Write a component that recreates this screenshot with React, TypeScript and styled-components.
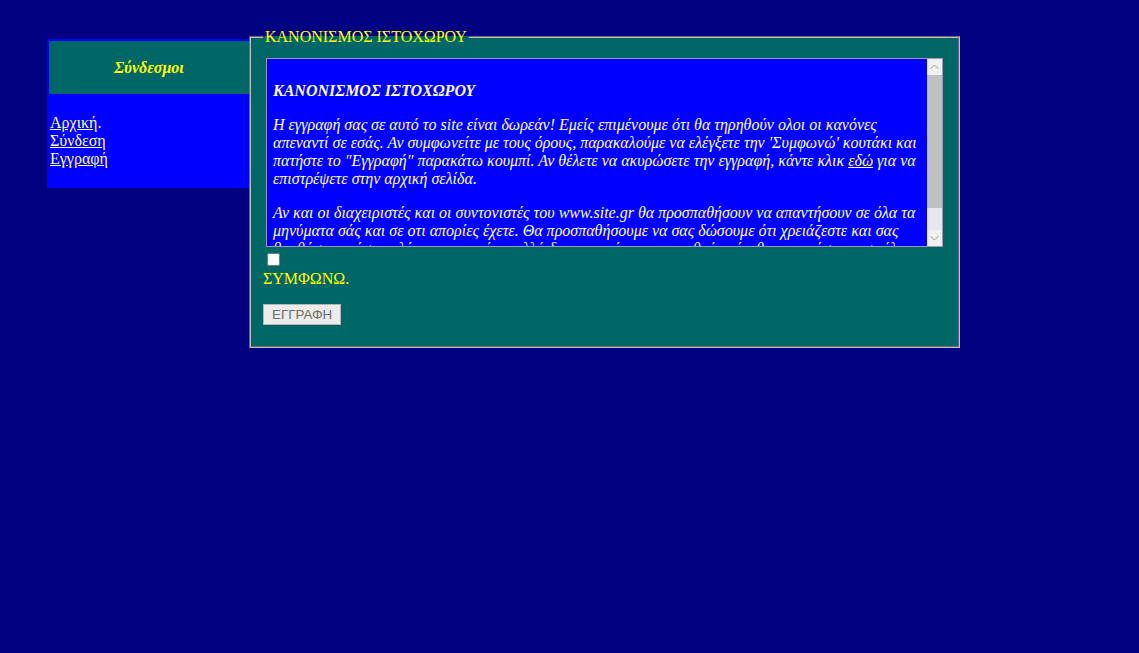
import styled, { createGlobalStyle } from "styled-components";

const GlobalStyle = createGlobalStyle`
  html, body {
    margin: 0;
    padding: 0;
    background: #000080;
  }
  body {
    font-family: "Liberation Serif", "Times New Roman", serif;
    font-size: 16px;
    line-height: 18px;
    color: #ffff00;
  }
`;

const Page = styled.div`
  display: flex;
  align-items: flex-start;
  padding: 28px 0 0 47px;
  min-height: 653px;
  box-sizing: border-box;
`;

const Sidebar = styled.div`
  width: 202px;
  margin-top: 11px;
  padding: 2px 0 2px 2px;
  box-sizing: border-box;
  background: #0000ff;
`;

const SidebarHeader = styled.div`
  height: 53px;
  display: flex;
  align-items: center;
  justify-content: center;
  background: #006666;
  color: #ffff00;
  font-weight: bold;
  font-style: italic;
  font-size: 16px;
`;

const SidebarLinks = styled.div`
  padding: 20px 1px 18px;
`;

const NavLink = styled.a`
  color: #ffffcc;
  text-decoration: underline;
`;

const Rules = styled.fieldset`
  width: 711px;
  box-sizing: border-box;
  margin: 0;
  padding: 12px 12px 21px;
  border: 2px groove #c0c0c0;
  background: #006666;
  min-width: 0;
`;

const Legend = styled.legend`
  padding: 0 2px;
  color: #ffff00;
  font-size: 16px;
  line-height: 18px;
`;

const ScrollFrame = styled.div`
  display: flex;
  width: 677px;
  height: 189px;
  box-sizing: border-box;
  margin: 0 auto;
  background: #0000ff;
  border: 1px solid #9a9ab0;
`;

const ScrollContent = styled.div`
  flex: 1;
  overflow: hidden;
  padding: 7px 6px 6px;
  color: #ffffff;
  font-style: italic;
`;

const ScrollBar = styled.div`
  width: 15px;
  display: flex;
  flex-direction: column;
  background: #f0f0f0;
`;

const ScrollArrow = styled.div`
  height: 16px;
  display: flex;
  align-items: center;
  justify-content: center;
  background: #f0f0f0;
`;

const ScrollTrack = styled.div`
  flex: 1;
  background: #e8e8ec;
`;

const ScrollThumb = styled.div<{ $size: number }>`
  height: ${(p) => p.$size}px;
  background: #c0c0c0;
`;

const Para = styled.p<{ $bold?: boolean }>`
  margin: 16px 0;
  font-weight: ${(p) => (p.$bold ? "bold" : "normal")};
`;

const InlineLink = styled.a`
  color: #ffffcc;
  text-decoration: underline;
`;

const Check = styled.input`
  display: block;
  width: 13px;
  height: 13px;
  margin: 6px 0 4px 4px;
`;

const AgreeLabel = styled.div`
  color: #ffff00;
`;

const SubmitButton = styled.button`
  display: block;
  margin-top: 16px;
  height: 21px;
  padding: 0 8px;
  font-family: "Liberation Sans", Arial, sans-serif;
  font-size: 13.33px;
  color: #6d6d6d;
  background: #ececec;
  border: 1px solid #b5b5b5;
  border-radius: 0;
`;

const Chevron = ({ up }: { up?: boolean }) => (
  <svg width="9" height="6" viewBox="0 0 9 6">
    <path
      d={up ? "M0.5 5 L4.5 1 L8.5 5" : "M0.5 1 L4.5 5 L8.5 1"}
      fill="none"
      stroke="#a0a0a0"
      strokeWidth="1"
    />
  </svg>
);

export default function App() {
  return (
    <>
      <GlobalStyle />
      <Page>
        <Sidebar>
          <SidebarHeader>Σύνδεσμοι</SidebarHeader>
          <SidebarLinks>
            <NavLink href="#">Αρχική</NavLink>.
            <br />
            <NavLink href="#">Σύνδεση</NavLink>
            <br />
            <NavLink href="#">Εγγραφή</NavLink>
          </SidebarLinks>
        </Sidebar>
        <Rules>
          <Legend>ΚΑΝΟΝΙΣΜΟΣ ΙΣΤΟΧΩΡΟΥ</Legend>
          <ScrollFrame>
            <ScrollContent>
              <Para $bold>ΚΑΝΟΝΙΣΜΟΣ ΙΣΤΟΧΩΡΟΥ</Para>
              <Para>
                Η εγγραφή σας σε αυτό το site είναι δωρεάν! Εμείς επιμένουμε ότι
                θα τηρηθούν ολοι οι κανόνες απεναντί σε εσάς. Αν συμφωνείτε με
                τους όρους, παρακαλούμε να ελέγξετε την 'Συμφωνώ' κουτάκι και
                πατήστε το "Εγγραφή" παρακάτω κουμπί. Αν θέλετε να ακυρώσετε την
                εγγραφή, κάντε κλικ <InlineLink href="#">εδώ</InlineLink> για να
                επιστρέψετε στην αρχική σελίδα.
              </Para>
              <Para>
                Αν και οι διαχειριστές και οι συντονιστές του www.site.gr θα
                προσπαθήσουν να απαντήσουν σε όλα τα μηνύματα σάς και σε οτι
                απορίες έχετε. Θα προσπαθήσουμε να σας δώσουμε ότι χρειάζεστε και
                σας βοηθήσουμε όσο καλύτερα μπορούμε, αλλά δεν μπορούμε να
                εγγυηθούμε ότι θα απαντήσουμε σε όλα.
              </Para>
            </ScrollContent>
            <ScrollBar>
              <ScrollArrow>
                <Chevron up />
              </ScrollArrow>
              <ScrollTrack>
                <ScrollThumb $size={133} />
              </ScrollTrack>
              <ScrollArrow>
                <Chevron />
              </ScrollArrow>
            </ScrollBar>
          </ScrollFrame>
          <Check type="checkbox" />
          <AgreeLabel>ΣΥΜΦΩΝΩ.</AgreeLabel>
          <SubmitButton type="button" disabled>
            ΕΓΓΡΑΦΗ
          </SubmitButton>
        </Rules>
      </Page>
    </>
  );
}
